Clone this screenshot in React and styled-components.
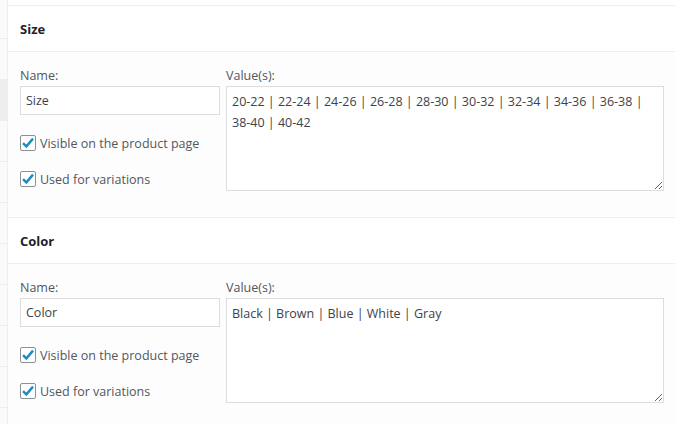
import React from 'react'
import styled, { createGlobalStyle } from 'styled-components'

const GlobalStyle = createGlobalStyle`
  html, body {
    margin: 0;
    padding: 0;
    background: #fff;
    font-family: "Open Sans", "Noto Sans", "Liberation Sans", sans-serif;
    font-size: 12.5px;
    color: #3c434a;
  }
  * { box-sizing: border-box; }
`

const Page = styled.div`
  display: flex;
  width: 675px;
  height: 424px;
  overflow: hidden;
`

const Tabs = styled.ul`
  list-style: none;
  margin: 0;
  padding: 0;
  width: 7px;
  flex-shrink: 0;
  background: #fafafa;
`

const Tab = styled.li`
  height: ${(p) => (p.first ? 39 : 41)}px;
  border-bottom: 1px solid #eee;
  background: ${(p) => (p.active ? '#eee' : 'transparent')};
`

const Panel = styled.div`
  flex: 1;
  border-left: 1px solid #eee;
  padding-top: 5px;
`

const Attribute = styled.div`
  border-top: 1px solid #eee;
`

const Header = styled.h3`
  margin: 0;
  height: 46px;
  display: flex;
  align-items: center;
  padding: 0 12px;
  background: #fff;
  font-size: 13px;
  font-weight: 700;
  color: #1d2327;
  border-bottom: 1px solid #eee;
`

const Body = styled.div`
  display: flex;
  gap: 6px;
  padding: 15px 11px 20px 12px;
  background: #fdfdfd;
`

const NameCol = styled.div`
  width: 200px;
  flex-shrink: 0;
`

const ValueCol = styled.div`
  flex: 1;
`

const Label = styled.label`
  display: block;
  line-height: 18px;
  margin-bottom: 1px;
  color: #50575e;
`

const TextInput = styled.input`
  display: block;
  width: 100%;
  height: 29px;
  margin: 0;
  padding: 0 5px;
  border: 1px solid #ddd;
  border-radius: 0;
  background: #fff;
  font: inherit;
  color: #3c434a;
  outline: none;
`

const TextArea = styled.textarea`
  display: block;
  width: 100%;
  height: 105px;
  margin: 0;
  padding: 4px 5px;
  border: 1px solid #ddd;
  border-radius: 0;
  background: #fff;
  font: inherit;
  line-height: 21px;
  color: #3c434a;
  resize: vertical;
  outline: none;
`

const Checks = styled.div`
  margin-top: 10px;
`

const CheckRow = styled.div`
  height: 36px;
  display: flex;
  align-items: center;
  gap: 4px;
  color: #50575e;
`

const Box = styled.span`
  width: 16px;
  height: 16px;
  border: 1px solid #8c8f94;
  border-radius: 2px;
  background: #fff;
  display: flex;
  align-items: center;
  justify-content: center;
  flex-shrink: 0;
`

const Check = () => (
  <svg width="14" height="14" viewBox="0 0 14 14">
    <path d="M2 7.2 L5.4 10.4 L12 2.6" fill="none" stroke="#1e8cbe" strokeWidth="2.4" strokeLinejoin="miter" />
  </svg>
)

const CheckItem = ({ children }) => (
  <CheckRow>
    <Box><Check /></Box>
    <span>{children}</span>
  </CheckRow>
)

const attributes = [
  {
    name: 'Size',
    values: '20-22 | 22-24 | 24-26 | 26-28 | 28-30 | 30-32 | 32-34 | 34-36 | 36-38 | 38-40 | 40-42',
  },
  {
    name: 'Color',
    values: 'Black | Brown | Blue | White | Gray',
  },
]

const App = () => {
  return (
    <>
      <GlobalStyle />
      <Page>
        <Tabs>
          <Tab first />
          <Tab />
          <Tab active />
          <Tab />
          <Tab />
          <Tab />
          <Tab />
          <Tab />
          <Tab />
          <Tab />
        </Tabs>
        <Panel>
          {attributes.map((attr) => (
            <Attribute key={attr.name}>
              <Header>{attr.name}</Header>
              <Body>
                <NameCol>
                  <Label>Name:</Label>
                  <TextInput type="text" defaultValue={attr.name} />
                  <Checks>
                    <CheckItem>Visible on the product page</CheckItem>
                    <CheckItem>Used for variations</CheckItem>
                  </Checks>
                </NameCol>
                <ValueCol>
                  <Label>Value(s):</Label>
                  <TextArea defaultValue={attr.values} />
                </ValueCol>
              </Body>
            </Attribute>
          ))}
        </Panel>
      </Page>
    </>
  )
}

export default App
